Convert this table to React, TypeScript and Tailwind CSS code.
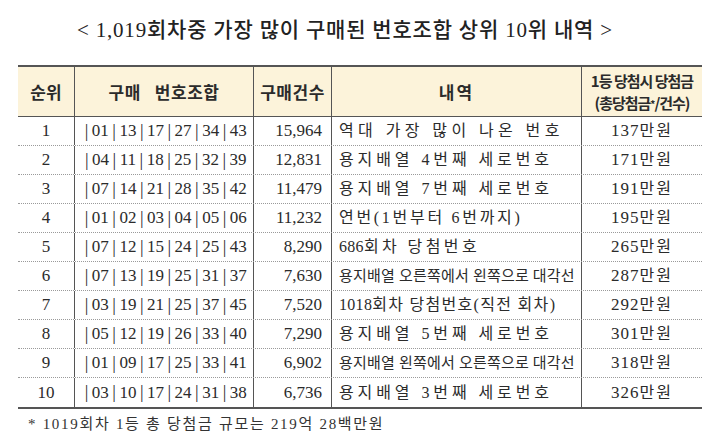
import React from "react";

const rows: { rank: string; nums: string[]; count: string; desc: string; descCls: string; prize: string }[] = [
  { rank: "1", nums: ["01", "13", "17", "27", "34", "43"], count: "15,964", desc: "역대 가장 많이 나온 번호", descCls: "text-[16px] tracking-[4.4px]", prize: "137" },
  { rank: "2", nums: ["04", "11", "18", "25", "32", "39"], count: "12,831", desc: "용지배열 4번째 세로번호", descCls: "text-[16px] tracking-[3.9px]", prize: "171" },
  { rank: "3", nums: ["07", "14", "21", "28", "35", "42"], count: "11,479", desc: "용지배열 7번째 세로번호", descCls: "text-[16px] tracking-[3.9px]", prize: "191" },
  { rank: "4", nums: ["01", "02", "03", "04", "05", "06"], count: "11,232", desc: "연번(1번부터 6번까지)", descCls: "text-[16px] tracking-[2.7px]", prize: "195" },
  { rank: "5", nums: ["07", "12", "15", "24", "25", "43"], count: "8,290", desc: "686회차 당첨번호", descCls: "text-[16px] tracking-[3.4px]", prize: "265" },
  { rank: "6", nums: ["07", "13", "19", "25", "31", "37"], count: "7,630", desc: "용지배열 오른쪽에서 왼쪽으로 대각선", descCls: "text-[15px] tracking-[0.2px]", prize: "287" },
  { rank: "7", nums: ["03", "19", "21", "25", "37", "45"], count: "7,520", desc: "1018회차 당첨번호(직전 회차)", descCls: "text-[16px] tracking-[1.3px]", prize: "292" },
  { rank: "8", nums: ["05", "12", "19", "26", "33", "40"], count: "7,290", desc: "용지배열 5번째 세로번호", descCls: "text-[16px] tracking-[3.9px]", prize: "301" },
  { rank: "9", nums: ["01", "09", "17", "25", "33", "41"], count: "6,902", desc: "용지배열 왼쪽에서 오른쪽으로 대각선", descCls: "text-[15px] tracking-[0.2px]", prize: "318" },
  { rank: "10", nums: ["03", "10", "17", "24", "31", "38"], count: "6,736", desc: "용지배열 3번째 세로번호", descCls: "text-[16px] tracking-[3.9px]", prize: "326" },
];

const serif = "font-['Liberation_Serif','Noto_Sans_CJK_KR',serif]";
const gothic = "font-['Noto_Sans_CJK_KR','Noto_Sans',sans-serif]";

function Desc({ text }: { text: string }) {
  const parts = text.split(/(\d{2,})/);
  return (
    <>
      {parts.map((p, i) =>
        /^\d{2,}$/.test(p) ? (
          <span key={i} className="tracking-[0.3px]">
            {p}
          </span>
        ) : (
          <React.Fragment key={i}>{p}</React.Fragment>
        )
      )}
    </>
  );
}

export default function App() {
  return (
    <div className={`w-[718px] h-[439px] bg-white text-[#2b2b2b] ${serif}`}>
      <div className="h-[65px] flex items-center pl-[77px] pb-[4px]">
        <div className="text-[21px] tracking-[0.8px] font-medium text-[#222] whitespace-nowrap">
          &lt; 1,019회차중 가장 많이 구매된 번호조합 상위 10위 내역 &gt;
        </div>
      </div>
      <div className="ml-[18px] w-[684px] border-t-2 border-b-2 border-[#555]">
        <div className="grid grid-cols-[56px_179px_78px_250px_121px] bg-[#fcf3da] border-b border-[#555] h-[50px]">
          <div className={`flex items-center justify-center ${gothic} font-bold text-[17px]`}>순위</div>
          <div className={`flex items-center justify-center gap-[14px] border-l border-[#555] ${gothic} font-bold text-[17px] tracking-[0.5px]`}>
            <span>구매</span>
            <span>번호조합</span>
          </div>
          <div className={`flex items-center justify-center border-l border-[#555] ${gothic} font-bold text-[17px] tracking-[0.5px]`}>구매건수</div>
          <div className={`flex items-center justify-center border-l border-[#555] ${gothic} font-bold text-[17px] tracking-[2px]`}>내역</div>
          <div className={`flex flex-col items-center justify-center border-l border-[#555] ${gothic} font-bold text-[15px] tracking-[-1px] leading-[22px]`}>
            <span>1등 당첨시 당첨금</span>
            <span>
              (총당첨금<sup className="text-[10px] relative -top-[1px]">*</sup>/건수)
            </span>
          </div>
        </div>
        {rows.map((r, i) => (
          <div
            key={r.rank}
            className={`grid grid-cols-[56px_179px_78px_250px_121px] h-[29px] ${i < rows.length - 1 ? "border-b border-dotted border-[#9a9a9a]" : ""}`}
          >
            <div className="flex items-center justify-center text-[17px]">{r.rank}</div>
            <div className="flex items-center justify-center border-l border-[#555] text-[17px]">
              {r.nums.map((n, k) => (
                <React.Fragment key={k}>
                  <span className="mx-[3.5px] text-[18px]">|</span>
                  <span>{n}</span>
                </React.Fragment>
              ))}
            </div>
            <div className="flex items-center justify-end pr-[9px] border-l border-[#555] text-[17px]">{r.count}</div>
            <div className={`flex items-center pl-[7px] border-l border-[#555] whitespace-nowrap ${r.descCls}`}>
              <span>
                <Desc text={r.desc} />
              </span>
            </div>
            <div className="flex items-center justify-center border-l border-[#555] text-[17px] tracking-[1px]">
              {r.prize}
              <span className="text-[16px] tracking-[2px]">만원</span>
            </div>
          </div>
        ))}
      </div>
      <div className="h-[30px] flex items-center pl-[28px] text-[15px] tracking-[1.7px] text-[#333]">
        * 1019회차 1등 총 당첨금 규모는 219억 28백만원
      </div>
    </div>
  );
}
